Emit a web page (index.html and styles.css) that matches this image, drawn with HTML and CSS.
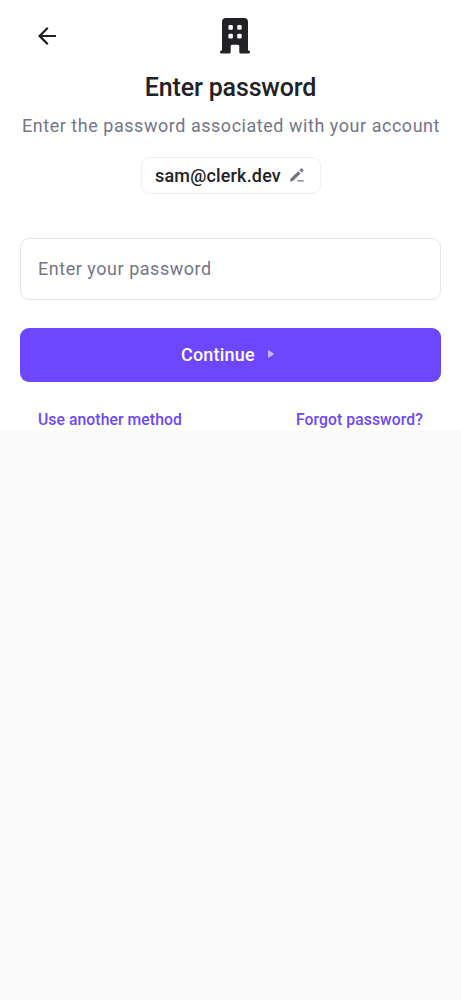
FILE: index.html
```html
<!DOCTYPE html>
<html lang="en">
<head>
<meta charset="utf-8">
<meta name="viewport" content="width=device-width, initial-scale=1">
<title>Enter password</title>
<link rel="stylesheet" href="styles.css">
</head>
<body>
<main class="screen">
  <header class="topbar">
    <button class="back" aria-label="Back">
      <svg viewBox="0 0 18 18" width="18" height="18"><path d="M18 7.9H4.3L10.5 1.6 9 0 0 9l9 9 1.5-1.6L4.3 10.1H18z"/></svg>
    </button>
    <svg class="logo" viewBox="0 0 30 36" width="30" height="36"><path fill-rule="evenodd" d="M6 0H24Q28 0 28 4V32.5H28.8Q30 32.5 30 34V34.3Q30 35.6 28.7 35.6H20.8Q19.3 35.6 19.3 34.1V28.2Q19.3 26.8 17.9 26.8H12.1Q10.7 26.8 10.7 28.2V34.1Q10.7 35.6 9.2 35.6H1.3Q0 35.6 0 34.3V34Q0 32.5 1.2 32.5H2V4Q2 0 6 0ZM9.7 7.1Q8.4 7.1 8.4 8.4V10.5Q8.4 11.8 9.7 11.8H11.6Q12.9 11.8 12.9 10.5V8.4Q12.9 7.1 11.6 7.1ZM18.5 7.1Q17.2 7.1 17.2 8.4V10.5Q17.2 11.8 18.5 11.8H20.4Q21.7 11.8 21.7 10.5V8.4Q21.7 7.1 20.4 7.1ZM9.7 15.8Q8.4 15.8 8.4 17.1V19.2Q8.4 20.5 9.7 20.5H11.6Q12.9 20.5 12.9 19.2V17.1Q12.9 15.8 11.6 15.8ZM18.5 15.8Q17.2 15.8 17.2 17.1V19.2Q17.2 20.5 18.5 20.5H20.4Q21.7 20.5 21.7 19.2V17.1Q21.7 15.8 20.4 15.8Z"/></svg>
  </header>
  <h1 class="title">Enter password</h1>
  <p class="subtitle">Enter the password associated with your account</p>
  <button class="identity">
    <span>sam@clerk.dev</span>
    <svg class="edit" viewBox="0 0 14 14" width="14" height="14"><path d="M.4 13.6Q0 13.6 0 13.2L.6 10.6 8.2 3.2 10.6 5.6 3 13ZM9.3 2.2 10.8.7Q11.5 0 12.2.7L13.2 1.7Q13.9 2.4 13.2 3.1L11.7 4.6ZM7.4 13.6V12.2H13.8V13.6Z"/></svg>
  </button>
  <input class="password" type="password" placeholder="Enter your password" aria-label="Password">
  <button class="continue">
    <span>Continue</span>
    <svg class="caret" viewBox="0 0 6 8" width="6" height="8"><path d="M0 .5Q0 0 .6.3L5.7 3.5Q6.2 4 5.7 4.5L.6 7.7Q0 8 0 7.5Z"/></svg>
  </button>
  <nav class="links">
    <a href="#">Use another method</a>
    <a href="#">Forgot password?</a>
  </nav>
</main>
</body>
</html>
```
FILE: styles.css
```css
* { box-sizing: border-box; }
body {
  margin: 0;
  background: #fafafa;
  color: #212126;
  font-family: Roboto, "Liberation Sans", sans-serif;
}
button, input { font: inherit; color: inherit; }
button { padding: 0; border: 0; background: none; }
svg { display: block; flex: none; fill: currentColor; }
.screen {
  display: flex;
  flex-direction: column;
  height: 431px;
  padding: 18px 20px 0;
  background: #fff;
}
.topbar {
  display: grid;
  grid-template-columns: 182px 30px;
  align-items: center;
  height: 36px;
  padding-left: 18px;
}
.title {
  margin: 18px 0 0;
  font-size: 25px;
  line-height: 32px;
  font-weight: 500;
  letter-spacing: -.15px;
  text-align: center;
}
.subtitle {
  margin: 10px -10px 0 -9px;
  color: #747686;
  font-size: 17.95px;
  line-height: 24px;
  letter-spacing: .56px;
  text-align: center;
  white-space: nowrap;
}
.identity {
  display: flex;
  align-items: center;
  align-self: center;
  gap: 9.5px;
  width: 180px;
  height: 37px;
  margin-top: 18.5px;
  padding: 0 13.5px;
  border: 1px solid #efeff0;
  border-radius: 9px;
  font-size: 17.95px;
  font-weight: 500;
  letter-spacing: .2px;
}
.edit { color: #747686; }
.password {
  width: 100%;
  height: 62px;
  margin-top: 44.5px;
  padding: 0 17px 1px;
  border: 1px solid #e7e7e8;
  border-radius: 9px;
  background: #fff;
  font-size: 17.95px;
  letter-spacing: .56px;
}
.password::placeholder { color: #747686; opacity: 1; }
.continue {
  display: flex;
  align-items: center;
  height: 54px;
  margin-top: 27.6px;
  padding: 0 0 1px 161px;
  gap: 13px;
  border-radius: 9px;
  background: #6c47ff;
  color: #fff;
  font-size: 17.95px;
  font-weight: 500;
  letter-spacing: .22px;
}
.caret { opacity: .6; }
.links {
  display: flex;
  justify-content: space-between;
  margin-top: 28.4px;
  padding: 0 18px;
  font-size: 15.7px;
  line-height: 20px;
  font-weight: 500;
  letter-spacing: .09px;
}
.links a { color: #6c47ff; text-decoration: none; }
```
